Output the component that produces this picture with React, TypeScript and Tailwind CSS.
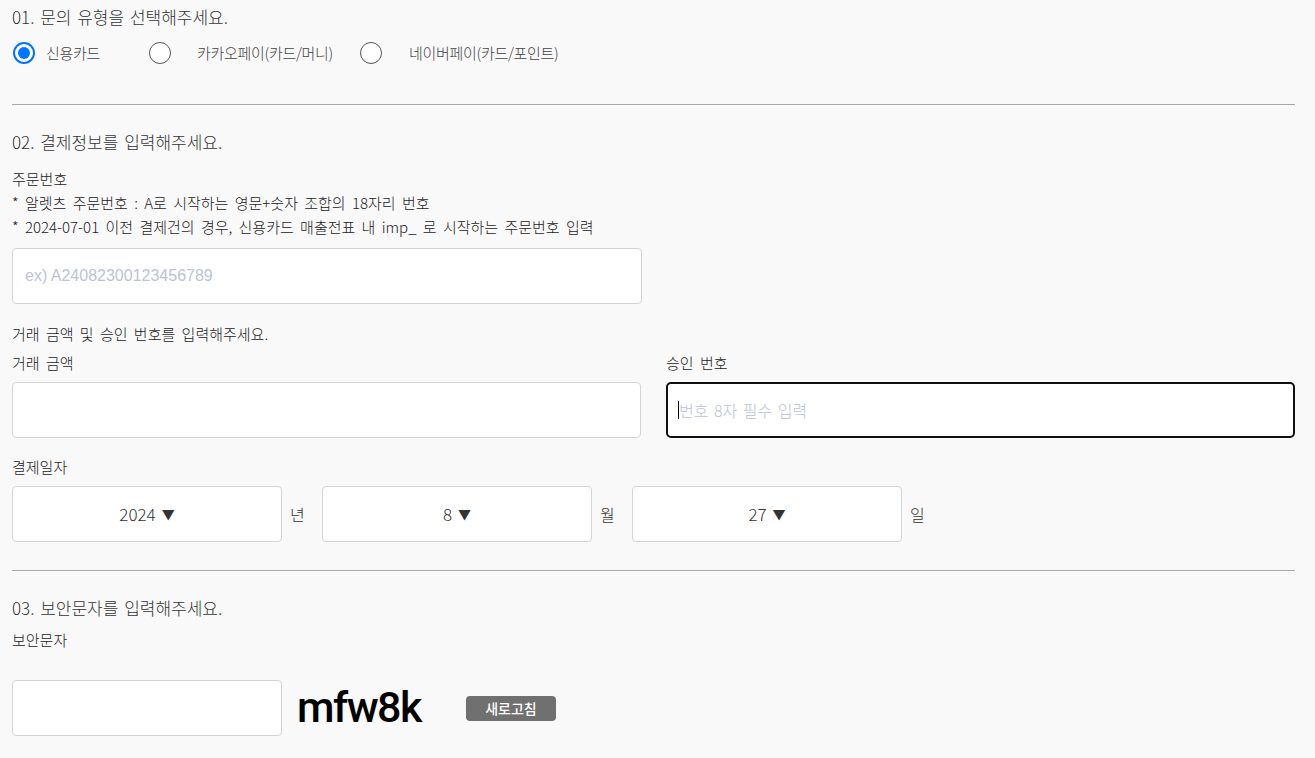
import React from "react";

const kr = { fontFamily: '"Noto Sans CJK KR", "Noto Sans", sans-serif' };
const ph = { fontFamily: '"Liberation Sans", "Noto Sans CJK KR", sans-serif' };

const Radio = ({ checked, label, className }: { checked?: boolean; label: string; className: string }) => (
  <label className={`flex items-center ${className}`}>
    {checked ? (
      <span className="flex h-[22px] w-[22px] items-center justify-center rounded-full border-2 border-[#0075ff] bg-white">
        <span className="h-[12px] w-[12px] rounded-full bg-[#0075ff]" />
      </span>
    ) : (
      <span className="h-[22px] w-[22px] rounded-full border border-[#555] bg-white" />
    )}
    <span className="text-[15px] leading-6 tracking-[-0.3px] text-[#444]">{label}</span>
  </label>
);

const Select = ({ value, unit }: { value: string; unit: string }) => (
  <div className="flex items-center">
    <div className="flex h-[56px] w-[270px] items-center justify-center gap-[6px] rounded-[4px] border border-[#d5d5d5] bg-white text-[17px] text-[#333]">
      <span>{value}</span>
      <span className="text-[13px]">▼</span>
    </div>
    <span className="ml-[8px] mr-[17px] w-[15px] text-base text-[#333]">{unit}</span>
  </div>
);

export default function App() {
  return (
    <div className="min-h-[758px] bg-[#f9f9f9] pl-3 pr-5 pt-[5px] font-light" style={kr}>
      <p className="text-[17px] leading-6 text-[#333] [word-spacing:2px]">01. 문의 유형을 선택해주세요.</p>
      <div className="mt-3 flex items-center pl-px">
        <Radio checked label="신용카드" className="w-[136px] gap-[11px]" />
        <Radio label="카카오페이(카드/머니)" className="w-[211px] gap-[26px]" />
        <Radio label="네이버페이(카드/포인트)" className="gap-[27px]" />
      </div>

      <hr className="mt-[39px] border-0 border-t border-[#a8a8a8]" />

      <p className="mt-[25px] text-[17px] leading-6 text-[#333] [word-spacing:2px]">02. 결제정보를 입력해주세요.</p>
      <div className="mt-[13px] text-[15px] leading-6 text-[#222] [word-spacing:3px]">
        <p>주문번호</p>
        <p>* 알렛츠 주문번호 : A로 시작하는 영문+숫자 조합의 18자리 번호</p>
        <p>* 2024-07-01 이전 결제건의 경우, 신용카드 매출전표 내 imp_ 로 시작하는 주문번호 입력</p>
      </div>
      <input
        className="mt-[9px] block h-[56px] w-[630px] rounded-[4px] border border-[#d5d5d5] bg-white px-3 text-base outline-none placeholder:text-[#bcc3d0]"
        style={ph}
        placeholder="ex) A24082300123456789"
      />

      <p className="mt-[18px] text-[15px] leading-6 text-[#222] [word-spacing:3px]">거래 금액 및 승인 번호를 입력해주세요.</p>
      <div className="mt-[5px] grid grid-cols-2 gap-x-[25px]">
        <div>
          <p className="text-[15px] leading-6 text-[#222] [word-spacing:3px]">거래 금액</p>
          <input className="mt-[7px] block h-[56px] w-full rounded-[4px] border border-[#d5d5d5] bg-white px-3 text-base outline-none" />
        </div>
        <div>
          <p className="text-[15px] leading-6 text-[#222] [word-spacing:3px]">승인 번호</p>
          <div className="mt-[7px] flex h-[56px] w-full items-center rounded-[5px] border-2 border-[#111] bg-white pl-[10px]">
            <span className="h-[18px] w-px bg-black" />
            <span className="text-[16px] text-[#bcc3d0] [word-spacing:2px]">번호 8자 필수 입력</span>
          </div>
        </div>
      </div>

      <p className="mt-[17px] text-[15px] leading-6 text-[#222]">결제일자</p>
      <div className="mt-[7px] flex items-center">
        <Select value="2024" unit="년" />
        <Select value="8" unit="월" />
        <Select value="27" unit="일" />
      </div>

      <hr className="mt-[28px] border-0 border-t border-[#a8a8a8]" />

      <p className="mt-[25px] text-[17px] leading-6 text-[#333] [word-spacing:2px]">03. 보안문자를 입력해주세요.</p>
      <p className="mt-[8px] text-[15px] leading-6 text-[#222]">보안문자</p>
      <div className="mt-[28px] flex items-center">
        <input className="block h-[56px] w-[270px] rounded-[4px] border border-[#d5d5d5] bg-white px-3 text-base outline-none" />
        <span
          className="ml-[15px] mb-[2px] text-[43px] font-medium leading-none tracking-[-1.5px] text-black"
          style={{ fontFamily: 'Roboto, "Liberation Sans", sans-serif' }}
        >
          mfw8k
        </span>
        <button className="ml-[45px] h-[25px] w-[90px] rounded-[4px] bg-[#707070] text-sm font-medium text-white">
          새로고침
        </button>
      </div>
    </div>
  );
}
